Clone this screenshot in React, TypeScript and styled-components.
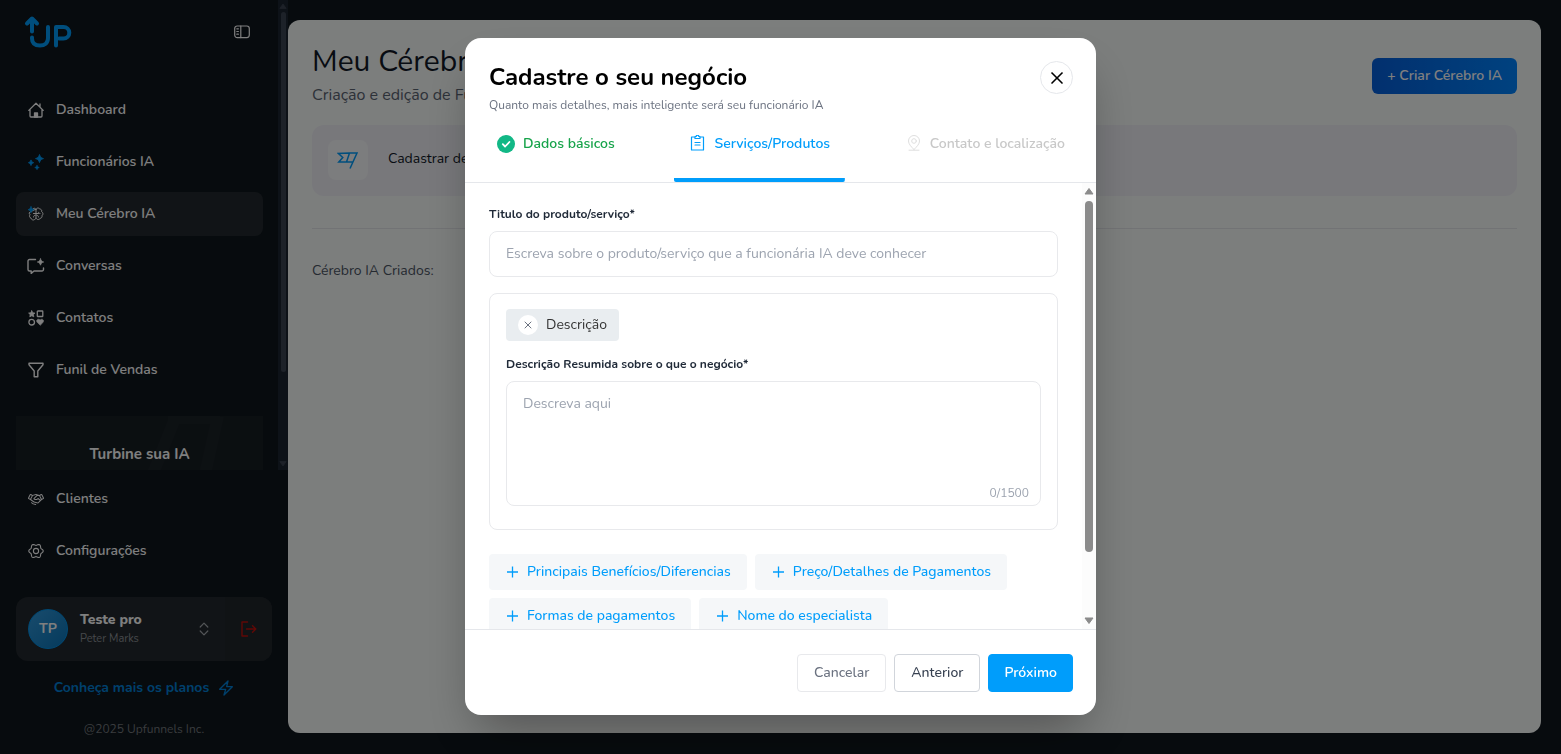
import React, { useState } from 'react';
import styled, { createGlobalStyle } from 'styled-components';
import { X } from 'lucide-react';
import { PiHandshake } from 'react-icons/pi';

const blue = '#009dfb';

const GlobalStyle = createGlobalStyle`
  *, *::before, *::after { box-sizing: border-box; }
  body {
    margin: 0;
    background: #0e161c;
    font-family: Nunito, Lato, "Open Sans", sans-serif;
    font-size: 14px;
    line-height: 20px;
    color: #111827;
  }
  button, input, textarea { font: inherit; color: inherit; }
  button { cursor: pointer; }
  h1, h2, p { margin: 0; }
  svg { display: block; flex: none; }
`;

/* ---------- page shell ---------- */

const Shell = styled.div`
  display: flex;
  height: 100vh;
  overflow: hidden;
`;

const Sidebar = styled.aside`
  display: flex;
  flex-direction: column;
  flex: 0 0 288px;
  color: #fff;
`;

const SidebarScroll = styled.div`
  display: flex;
  flex: 1;
  min-height: 0;
`;

const SidebarContent = styled.div`
  flex: 1;
  min-width: 0;
  padding: 16px 15px 0 16px;
  overflow: hidden;
`;

const SidebarHead = styled.div`
  display: flex;
  align-items: center;
  justify-content: space-between;
  height: 32px;
  padding: 0 13px 0 8px;
`;

const IconButton = styled.button`
  display: flex;
  align-items: center;
  justify-content: center;
  padding: 0;
  border: 0;
  background: none;
`;

const NavList = styled.nav<{ $top: number }>`
  display: flex;
  flex-direction: column;
  gap: 8px;
  padding-top: ${(p) => p.$top}px;
`;

const NavItem = styled.a<{ $active?: boolean }>`
  display: flex;
  align-items: center;
  gap: 12px;
  height: 44px;
  padding: 0 12px;
  border-radius: 8px;
  background: ${(p) => (p.$active ? '#23292e' : 'transparent')};
  color: #fff;
  font-weight: 600;
  text-decoration: none;
`;

const Banner = styled.section`
  display: grid;
  justify-items: center;
  height: 120px;
  margin-top: 24px;
  overflow: hidden;
  background: #171e23;
  > * { grid-area: 1 / 1; }
`;

const BannerMark = styled.svg`
  justify-self: end;
  margin-right: 39px;
`;

const BannerTitle = styled.strong`
  margin-top: 28px;
  font-size: 15px;
  font-weight: 700;
`;

const SidebarFoot = styled.div`
  display: flex;
  flex-direction: column;
  align-items: center;
  padding: 0 16px 15px;
  > nav { align-self: stretch; }
`;

const UserCard = styled.div`
  display: flex;
  align-self: stretch;
  height: 64px;
  margin-top: 24px;
  border-radius: 12px;
  overflow: hidden;
  background: #23292e;
`;

const UserButton = styled.button`
  display: flex;
  align-items: center;
  gap: 12px;
  flex: 1;
  padding: 0 16px 0 12px;
  border: 0;
  background: none;
  text-align: left;
`;

const Avatar = styled.span`
  display: flex;
  align-items: center;
  justify-content: center;
  width: 40px;
  height: 40px;
  border: 1px solid #0091e8;
  border-radius: 50%;
  background: linear-gradient(135deg, #3198da, #0a74b8);
  font-weight: 700;
`;

const UserText = styled.span`
  flex: 1;
  display: flex;
  flex-direction: column;
  font-weight: 800;
`;

const UserSub = styled.small`
  font-size: 11px;
  line-height: 18px;
  font-weight: 400;
  color: #8b9096;
`;

const LogoutButton = styled(IconButton)`
  width: 47px;
  background: #20262b;
`;

const PlansLink = styled.a`
  display: flex;
  align-items: center;
  gap: 9px;
  margin-top: 17px;
  color: #0080d8;
  font-weight: 700;
  text-decoration: none;
`;

const Copyright = styled.p`
  margin-top: 21px;
  font-size: 12px;
  color: #74787c;
`;

const Main = styled.main`
  flex: 1;
  min-width: 0;
  margin: 20px 20px 21px 0;
  padding: 24px;
  border-radius: 12px;
  background: #f9fcfb;
`;

const MainHead = styled.header`
  display: flex;
  justify-content: space-between;
  align-items: center;
  height: 63px;
`;

const PageTitle = styled.h1`
  padding-top: 2px;
  font-size: 30px;
  line-height: 36px;
  font-weight: 400;
`;

const PageSub = styled.p`
  font-size: 16px;
  line-height: 30px;
  color: #5b6472;
`;

const CreateButton = styled.button`
  height: 36px;
  padding: 0 15px;
  border: 0;
  border-radius: 6px;
  background: linear-gradient(90deg, #0560dd, #0084ff);
  color: #fff;
  font-weight: 600;
`;

const HintCard = styled.div`
  display: flex;
  align-items: center;
  gap: 20px;
  height: 71px;
  margin-top: 18px;
  padding: 0 16px 2px;
  border-radius: 12px;
  background: #f0f1f7;
`;

const HintText = styled.span`
  padding-bottom: 2px;
`;

const HintIcon = styled.span`
  display: flex;
  align-items: center;
  justify-content: center;
  width: 40px;
  height: 40px;
  border-radius: 8px;
  background: #f9fafc;
`;

const Rule = styled.hr`
  height: 1px;
  margin: 32px 0;
  border: 0;
  background: #e5e7eb;
`;

const Muted = styled.p`
  color: #4b5563;
`;

/* ---------- drawn scrollbar ---------- */

const Track = styled.div<{ $bg: string; $fg: string; $w: number }>`
  display: flex;
  flex-direction: column;
  align-items: center;
  flex: 0 0 ${(p) => p.$w}px;
  padding: ${(p) => (p.$w > 12 ? '4px 1px 4px 0' : '2px 0')};
  gap: ${(p) => (p.$w > 12 ? 6 : 2)}px;
  background: ${(p) => p.$bg};
  color: ${(p) => p.$fg};
`;

const Thumb = styled.div<{ $grow: number }>`
  flex: ${(p) => p.$grow} 0 0;
  width: calc(100% - 5px);
  border-radius: 4px;
  background: currentColor;
`;

const Rest = styled.div<{ $grow: number }>`
  flex: ${(p) => p.$grow} 0 0;
`;

function ScrollBar({ bg, fg, w, thumb }: { bg: string; fg: string; w: number; thumb: number }) {
  const s = w > 12 ? 10 : 8;
  return (
    <Track $bg={bg} $fg={fg} $w={w} aria-hidden>
      <svg width={s} height="8" viewBox="0 0 10 8" fill="currentColor" stroke="currentColor" strokeLinejoin="round"><path d="M5 1.500 9 7H1z" /></svg>
      <Thumb $grow={thumb} />
      <Rest $grow={100 - thumb} />
      <svg width={s} height="8" viewBox="0 0 10 8" fill="currentColor" stroke="currentColor" strokeLinejoin="round"><path d="M5 6.500 9 1H1z" /></svg>
    </Track>
  );
}

/* ---------- modal ---------- */

const Overlay = styled.div`
  position: fixed;
  inset: 0;
  display: flex;
  justify-content: center;
  padding: 38px 24px 39px;
  background: rgba(0, 0, 0, 0.5);
`;

const Modal = styled.section`
  display: flex;
  flex-direction: column;
  width: 631px;
  max-width: 100%;
  border-radius: 16px;
  overflow: hidden;
  background: #fff;
  box-shadow: 0 25px 50px -12px rgba(0, 0, 0, 0.35);
`;

const ModalHead = styled.header`
  display: flex;
  justify-content: space-between;
  padding: 23px 23px 0 24px;
`;

const ModalTitle = styled.h2`
  font-size: 24px;
  line-height: 32px;
  font-weight: 700;
  color: #000;
`;

const ModalSub = styled.p`
  font-size: 12px;
  line-height: 24px;
  color: #6b7280;
`;

const CloseButton = styled(IconButton)`
  width: 33px;
  height: 33px;
  border: 1px solid #e5e7eb;
  border-radius: 50%;
  color: #000;
`;

const Tabs = styled.div`
  display: flex;
  justify-content: space-between;
  padding: 6px 16px 0;
  border-bottom: 1px solid #e5e7eb;
`;

const Tab = styled.button<{ $tone: string; $on?: boolean }>`
  display: flex;
  align-items: flex-start;
  gap: 8px;
  height: 59px;
  padding: 11px 15px 0 16px;
  border: 0;
  background: ${(p) => (p.$on ? `linear-gradient(${blue}, ${blue}) bottom / 100% 4px no-repeat` : 'none')};
  border-radius: 2px;
  color: ${(p) => p.$tone};
  font-weight: 600;
  svg { margin-top: 1px; }
`;

const Body = styled.div`
  display: flex;
  flex: 1;
  min-height: 0;
`;

const Form = styled.form`
  flex: 1;
  min-width: 0;
  padding: 20px 24px 0;
  overflow: hidden;
`;

const Label = styled.label`
  display: block;
  font-size: 12px;
  line-height: 22px;
  font-weight: 700;
  color: #1f2937;
`;

const TextInput = styled.input`
  width: 100%;
  height: 46px;
  margin-top: 6px;
  padding: 0 16px 2px;
  border: 1px solid #e8e9ec;
  border-radius: 8px;
  outline: 0;
  &::placeholder { color: #9ca3af; opacity: 1; }
`;

const FieldCard = styled.div`
  display: flex;
  flex-direction: column;
  align-items: flex-start;
  margin-top: 16px;
  padding: 15px 16px 23px;
  border: 1px solid #e8e9ec;
  border-radius: 8px;
`;

const Chip = styled.div`
  display: flex;
  align-items: center;
  gap: 8px;
  height: 32px;
  margin-bottom: 12px;
  padding: 0 12px;
  border-radius: 4px;
  background: #e9edf0;
  color: #333;
`;

const ChipRemove = styled(IconButton)`
  width: 20px;
  height: 20px;
  border-radius: 50%;
  background: #fff;
  color: #6b7280;
`;

const AreaWrap = styled.div`
  align-self: stretch;
  display: grid;
  margin-top: 6px;
  > * { grid-area: 1 / 1; }
`;

const TextArea = styled.textarea`
  height: 125px;
  padding: 12px 16px;
  border: 1px solid #e8e9ec;
  border-radius: 8px;
  outline: 0;
  resize: none;
  &::placeholder { color: #9ca3af; opacity: 1; }
`;

const Counter = styled.span`
  align-self: end;
  justify-self: end;
  padding: 0 12px 3px;
  font-size: 12px;
  color: #9ca3af;
`;

const AddRow = styled.div`
  display: flex;
  flex-wrap: wrap;
  gap: 8px;
  margin-top: 24px;
`;

const AddButton = styled.button`
  display: flex;
  align-items: center;
  gap: 8px;
  height: 36px;
  padding: 0 16px 1px;
  border: 0;
  border-radius: 4px;
  background: #f5f7f9;
  color: ${blue};
  font-weight: 500;
`;

const ModalFoot = styled.footer`
  display: flex;
  justify-content: flex-end;
  gap: 8px;
  padding: 24px 23px 23px;
  border-top: 1px solid #e5e7eb;
`;

const FootButton = styled.button<{ $kind: 'ghost' | 'plain' | 'primary' }>`
  height: 38px;
  padding: 0 ${(p) => (p.$kind === 'primary' ? 15 : 16)}px;
  border: 1px solid ${(p) => ({ ghost: '#e8e9ec', plain: '#d1d5db', primary: blue })[p.$kind]};
  border-radius: 4px;
  background: ${(p) => (p.$kind === 'primary' ? blue : '#fff')};
  color: ${(p) => ({ ghost: '#6b7280', plain: '#374151', primary: '#fff' })[p.$kind]};
  font-weight: ${(p) => (p.$kind === 'primary' ? 600 : 500)};
`;

/* ---------- icons ---------- */

const line = { fill: 'none', stroke: 'currentColor', strokeLinecap: 'round', strokeLinejoin: 'round' } as const;

const Logo = () => (
  <svg width="50" height="34" viewBox="0 0 50 34" fill="none" stroke={blue} strokeWidth="4" strokeLinecap="round" strokeLinejoin="round">
    <path d="M8 16.500V4M3 8.500l5-5 5 5M8 22.500v1c0 5 3.500 7 8 7s8-2.500 8-7.500V12" />
    <path d="M32 30.500V12h7.500a5.800 5.800 0 0 1 0 11.600H35" />
  </svg>
);

const PanelIcon = () => (
  <svg width="16" height="14" viewBox="0 0 16 14" {...line} strokeWidth="1.200">
    <rect x="0.700" y="1" width="14.600" height="11.600" rx="2.500" />
    <path d="M6.800 1v11.600M2.800 3.800h1.600M2.800 6.500h1.600M2.800 9.200h1.600" />
  </svg>
);

const HomeIcon = () => (
  <svg width="16" height="16" viewBox="0 0 16 16" {...line} strokeWidth="1.300">
    <path d="M.8 8.400 8 1.300l7.200 7.100M2 7.600V14a1 1 0 0 0 1 1h10a1 1 0 0 0 1-1V7.600M12 4.800V2" />
    <path d="M6.500 15v-4h3v4z" fill="currentColor" />
  </svg>
);

const SparkIcon = () => (
  <svg width="16" height="16" viewBox="0 0 16 16" fill={blue} stroke={blue} strokeWidth="0.800" strokeLinejoin="round">
    <path d="M11.500.5c.9 2.700 1.500 3.300 4 4.100-2.500.8-3.100 1.500-4 4-.9-2.500-1.500-3.200-4-4 2.500-.8 3.100-1.400 4-4.100zM3 5.900c.7 1.800 1 2.200 2.700 2.800-1.700.6-2 1-2.700 2.800C2.300 9.700 2 9.300.4 8.700 2 8.100 2.300 7.700 3 5.900zM9 11.300c.5 1.400.9 1.800 2.200 2.200-1.300.4-1.700.8-2.200 2.100-.5-1.300-.9-1.700-2.200-2.100 1.300-.4 1.700-.8 2.200-2.200z" />
  </svg>
);

const BrainIcon = () => (
  <svg width="16" height="16" viewBox="0 0 16 16" {...line} strokeWidth="1">
    <path d="M8 3.500C7.500 1.800 5.300 1.800 4.700 3M2.800 5.500C1 6 .7 7.800 2 8.700c-1 1.300-.4 3 1 3.400.4 1.800 2.500 2.400 3.600 1.400.7-.3 1.300-.7 1.400-1.300V3.500zM8 3.500c.5-2 3-1.900 3.600-.5 1.600 0 2.600 1.400 2 2.700 1.700.9 1.700 3 .4 4 .3 1.500-.6 2.500-1.800 2.600-.7 1.700-3.600 1.700-4.200-.1" />
    <path d="M5.500 11c0-1 .6-1.700 1.600-1.700M10.500 11c0-1-.6-1.700-1.600-1.700M5.500 7.500h5M12 7.500c-.8 0-1.300-.4-1.500-1.200" />
    <path d="M3 .8c.6 1.700 1 2.200 2.900 2.900C4 4.300 3.600 4.800 3 6.600 2.400 4.800 2 4.300.2 3.700 2 3 2.400 2.500 3 .8z" fill={blue} stroke={blue} strokeWidth="0.800" />
  </svg>
);

const ChatIcon = () => (
  <svg width="16" height="17" viewBox="0 0 16 17" overflow="visible" {...line} strokeWidth="1.400">
    <path d="M7.500 1.500H1.500a1.500 1.500 0 0 0-1.500 1.500v8.500a1.500 1.500 0 0 0 1.500 1.500h1.700v2.400L6 13h8a1.500 1.500 0 0 0 1.500-1.500V10" />
    <path d="M12.500.8c.7 2 1.200 2.500 3.200 3.200-2 .7-2.500 1.200-3.200 3.200-.7-2-1.200-2.500-3.200-3.200 2-.7 2.500-1.200 3.200-3.200z" fill="currentColor" strokeWidth="0.700" />
  </svg>
);

const ShapesIcon = () => (
  <svg width="16" height="16" viewBox="0 0 16 16" {...line} strokeWidth="1.300">
    <path d="m3.800.8 1 2 2.200.3-1.600 1.500.4 2.200-2-1-2 1 .4-2.200L.6 3.100l2.200-.3z" fill="currentColor" strokeWidth="0.800" />
    <rect x="9.300" y="1" width="5.500" height="5.500" rx="0.600" />
    <circle cx="3.700" cy="12.200" r="2.800" />
    <path d="M12.100 15.200 9.100 12.200c-1.200-1.500 0-3.400 1.700-3 .6.100 1 .5 1.300.9.300-.4.700-.8 1.300-.9 1.700-.4 2.900 1.500 1.700 3z" fill="currentColor" strokeWidth="0.500" />
  </svg>
);

const FunnelIcon = () => (
  <svg width="16" height="16" viewBox="0 0 16 16" {...line} strokeWidth="1.400">
    <path d="M1 1.200h14v1.600L9.800 9v5.800H6.200V9L1 2.800z" />
  </svg>
);

/* Six soft lobes around a hub. */
const gearOutline = Array.from({ length: 72 }, (_, i) => {
  const a = (i * Math.PI) / 36;
  const r = 6.4 + 0.8 * Math.cos(6 * a);
  return `${(8 + r * Math.cos(a)).toFixed(2)},${(8 + r * Math.sin(a)).toFixed(2)}`;
}).join(' ');

const GearIcon = () => (
  <svg width="16" height="16" viewBox="0 0 16 16" {...line} strokeWidth="1.100">
    <polygon points={gearOutline} />
    <circle cx="8" cy="8" r="2.600" />
  </svg>
);

const SortIcon = () => (
  <svg width="10" height="14" viewBox="0 0 10 14" {...line} stroke="#a6abb0" strokeWidth="1.200">
    <path d="m1.200 5 3.800-3.800L8.800 5M1.200 9 5 12.800 8.800 9" />
  </svg>
);

const LogoutIcon = () => (
  <svg width="16" height="16" viewBox="0 0 16 16" {...line} stroke="#c0100c" strokeWidth="1.400">
    <path d="M6.500 1H1v14h5.500M5.500 8h9.300M11.500 4.700 14.800 8l-3.300 3.300" />
  </svg>
);

const BoltIcon = () => (
  <svg width="16" height="16" viewBox="0 0 24 24" {...line} strokeWidth="2">
    <path d="M2.500 14 15 1.500 13 10h8.500L9 22.500 11.500 14z" />
  </svg>
);

const SendIcon = () => (
  <svg width="22" height="20" viewBox="0 0 22 20" fill="none" stroke={blue} strokeWidth="1.500">
    <path d="M12.500 3 9.500 12H1.800l4-4.500L1.500 3.500l11-.5h7.500L13 18.500M9.500 12h6" />
  </svg>
);

const CheckIcon = () => (
  <svg width="18" height="18" viewBox="0 0 18 18">
    <circle cx="9" cy="9" r="9" fill="#12b886" />
    <path d="m5.800 9.200 2.300 2.300 4.300-4.500" fill="none" stroke="#fff" strokeWidth="1.800" strokeLinecap="round" strokeLinejoin="round" />
  </svg>
);

const ClipboardIcon = () => (
  <svg width="16" height="16" viewBox="0 0 16 16" {...line} strokeWidth="1.200">
    <path d="M5 2H1.500v13h12V2H10M5 3.500v-2h1.200a1.300 1.300 0 0 1 2.600 0H10v2zM5 7.500h5M5 10h5" />
  </svg>
);

const PinIcon = () => (
  <svg width="16" height="16" viewBox="0 0 16 16" {...line} strokeWidth="1" opacity="0.600">
    <path d="M8 14.500C5 11.500 2.500 9 2.500 6a5.500 5.500 0 0 1 11 0c0 3-2.500 5.500-5.500 8.500zM3 15.200h10" />
    <circle cx="8" cy="6" r="2.300" />
  </svg>
);

const PlusIcon = () => (
  <svg width="14" height="14" viewBox="0 0 14 14" fill="none" stroke="currentColor" strokeWidth="1.300">
    <path d="M7.500 1.500v11M2 7h11" />
  </svg>
);

/* ---------- content ---------- */

const mainNav = [
  { label: 'Dashboard', icon: <HomeIcon /> },
  { label: 'Funcionários IA', icon: <SparkIcon /> },
  { label: 'Meu Cérebro IA', icon: <BrainIcon />, active: true },
  { label: 'Conversas', icon: <ChatIcon /> },
  { label: 'Contatos', icon: <ShapesIcon /> },
  { label: 'Funil de Vendas', icon: <FunnelIcon /> },
];

const footNav = [
  { label: 'Clientes', icon: <PiHandshake size={16} /> },
  { label: 'Configurações', icon: <GearIcon /> },
];

const extras = [
  'Principais Benefícios/Diferencias',
  'Preço/Detalhes de Pagamentos',
  'Formas de pagamentos',
  'Nome do especialista',
];

export default function App() {
  const [text, setText] = useState('');
  return (
    <>
      <GlobalStyle />
      <Shell>
        <Sidebar>
          <SidebarScroll>
            <SidebarContent>
              <SidebarHead>
                <Logo />
                <IconButton aria-label="Recolher menu"><PanelIcon /></IconButton>
              </SidebarHead>
              <NavList $top={40}>
                {mainNav.map((n) => (
                  <NavItem key={n.label} href="#" $active={n.active}>{n.icon}{n.label}</NavItem>
                ))}
              </NavList>
              <Banner>
                <BannerMark width="90" height="90" viewBox="0 0 90 90" fill="none" stroke="#1b2227" strokeWidth="12" aria-hidden>
                  <path d="M6 90 42 0M34 2h52M84 0 64 90" />
                </BannerMark>
                <BannerTitle>Turbine sua IA</BannerTitle>
              </Banner>
            </SidebarContent>
            <ScrollBar bg="#1b2430" fg="#3b4452" w={10} thumb={81} />
          </SidebarScroll>
          <SidebarFoot>
            <NavList $top={7}>
              {footNav.map((n) => (
                <NavItem key={n.label} href="#">{n.icon}{n.label}</NavItem>
              ))}
            </NavList>
            <UserCard>
              <UserButton>
                <Avatar>TP</Avatar>
                <UserText>Teste pro<UserSub>Peter Marks</UserSub></UserText>
                <SortIcon />
              </UserButton>
              <LogoutButton aria-label="Sair"><LogoutIcon /></LogoutButton>
            </UserCard>
            <PlansLink href="#">Conheça mais os planos <BoltIcon /></PlansLink>
            <Copyright>@2025 Upfunnels Inc.</Copyright>
          </SidebarFoot>
        </Sidebar>

        <Main>
          <MainHead>
            <div>
              <PageTitle>Meu Cérebro IA</PageTitle>
              <PageSub>Criação e edição de Funcionários IA</PageSub>
            </div>
            <CreateButton>+ Criar Cérebro IA</CreateButton>
          </MainHead>
          <HintCard>
            <HintIcon><SendIcon /></HintIcon>
            <HintText>Cadastrar detalhes do negócio</HintText>
          </HintCard>
          <Rule />
          <Muted>Cérebro IA Criados:</Muted>
        </Main>
      </Shell>

      <Overlay>
        <Modal role="dialog" aria-modal="true" aria-labelledby="modal-title">
          <ModalHead>
            <div>
              <ModalTitle id="modal-title">Cadastre o seu negócio</ModalTitle>
              <ModalSub>Quanto mais detalhes, mais inteligente será seu funcionário IA</ModalSub>
            </div>
            <CloseButton aria-label="Fechar"><X size={20} /></CloseButton>
          </ModalHead>
          <Tabs role="tablist">
            <Tab role="tab" $tone="#16a34a"><CheckIcon />Dados básicos</Tab>
            <Tab role="tab" aria-selected $tone={blue} $on><ClipboardIcon />Serviços/Produtos</Tab>
            <Tab role="tab" $tone="#c8c8c8"><PinIcon />Contato e localização</Tab>
          </Tabs>
          <Body>
            <Form>
              <Label htmlFor="produto">Titulo do produto/serviço*</Label>
              <TextInput id="produto" placeholder="Escreva sobre o produto/serviço que a funcionária IA deve conhecer" />
              <FieldCard>
                <Chip>
                  <ChipRemove type="button" aria-label="Remover descrição"><X size={12} /></ChipRemove>
                  Descrição
                </Chip>
                <Label htmlFor="descricao">Descrição Resumida sobre o que o negócio*</Label>
                <AreaWrap>
                  <TextArea id="descricao" maxLength={1500} placeholder="Descreva aqui" value={text} onChange={(e) => setText(e.target.value)} />
                  <Counter>{text.length}/1500</Counter>
                </AreaWrap>
              </FieldCard>
              <AddRow>
                {extras.map((t) => (
                  <AddButton type="button" key={t}><PlusIcon />{t}</AddButton>
                ))}
              </AddRow>
            </Form>
            <ScrollBar bg="#fcfcfc" fg="#8b8b8b" w={14} thumb={87} />
          </Body>
          <ModalFoot>
            <FootButton $kind="ghost">Cancelar</FootButton>
            <FootButton $kind="plain">Anterior</FootButton>
            <FootButton $kind="primary">Próximo</FootButton>
          </ModalFoot>
        </Modal>
      </Overlay>
    </>
  );
}
